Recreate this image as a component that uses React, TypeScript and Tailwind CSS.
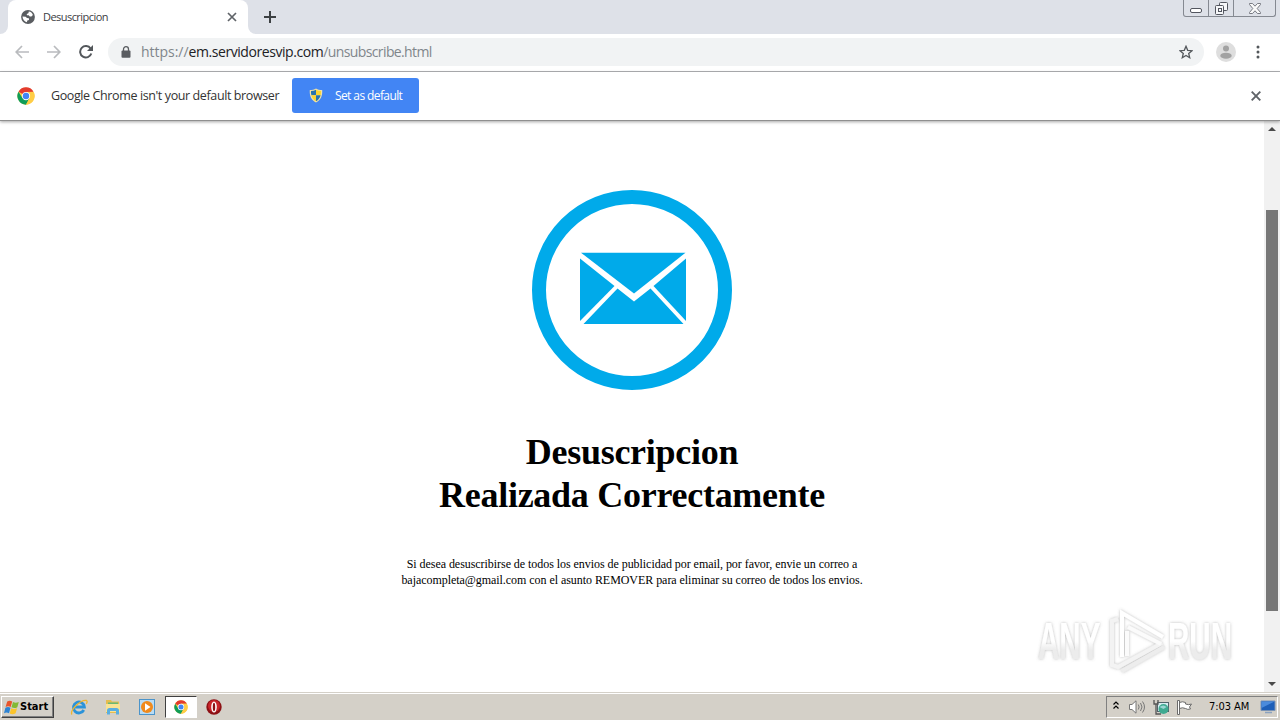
import React from 'react'

const uiFont = "font-['Open_Sans','Noto_Sans',sans-serif]"

const GlobeIcon = () => (
  <svg width="14" height="14" viewBox="0 0 14 14" className="shrink-0">
    <circle cx="7" cy="7" r="6.9" fill="#5a5d61" />
    <path d="M7.8 1.5c1.9.2 3.6 1.6 4.1 3.6L10.400 6.500 8.800 6.600 7.700 5.300 6 5.200 5.700 4 7.400 3.200z" fill="#fff" />
    <path d="M1.500 6.600 4.700 6.700 6 8 7.900 8.300 8 10 6.300 10.600 5.900 12.300C3.500 11.800 1.600 9.600 1.500 6.600z" fill="#fff" />
  </svg>
)

const ChromeIcon = ({ size }: { size: number }) => (
  <svg width={size} height={size} viewBox="0 0 48 48" className="shrink-0">
    <circle cx="24" cy="24" r="23" fill="#ffcd46" />
    <path d="M24 24 4.080 12.500A23 23 0 0 1 43.920 12.500L24 13z" fill="#e33b2e" />
    <path d="M4.080 12.500A23 23 0 0 0 24 47L33.500 29.500 24 34 14.500 29.500z" fill="#0f9d58" />
    <path d="M24 13H44.200A23 23 0 0 1 24 47L33.500 29.500z" fill="#ffcd46" />
    <circle cx="24" cy="24" r="11" fill="#fff" />
    <circle cx="24" cy="24" r="8.600" fill="#4285f4" />
  </svg>
)

const ShieldIcon = () => (
  <svg width="14" height="15" viewBox="0 0 14 15" className="shrink-0">
    <path d="M7 .4C5.200 1.500 3.200 2 .8 2c-.4 5.500 1.300 10 6.200 12.600C11.900 12 13.600 7.500 13.200 2 10.800 2 8.800 1.500 7 .4z" fill="#f0e2a8" />
    <path d="M7 1.700C5.500 2.500 3.900 2.900 2 3c-.1 1.600 0 3 .4 4.300H7z" fill="#2873ae" />
    <path d="M7 1.700c1.500.8 3.100 1.200 5 1.300.1 1.600 0 3-.4 4.300H7z" fill="#fbd431" />
    <path d="M2.400 7.300H7v6C4.700 12 3.100 10 2.400 7.300z" fill="#fbd431" />
    <path d="M11.600 7.300H7v6c2.300-1.300 3.900-3.300 4.600-6z" fill="#2873ae" />
  </svg>
)

const TabStrip = () => (
  <div className="flex h-[34px] shrink-0 items-start justify-between bg-[#dee1e8]">
    <div className="flex h-full items-end">
      <div className="h-full w-2 bg-white">
        <div className="h-full w-2 rounded-br-lg bg-[#dee1e8]" />
      </div>
      <div className="flex h-full w-[240px] items-center rounded-t-lg bg-white pr-[11px] pl-[13px]">
        <GlobeIcon />
        <span className="ml-2 flex-1 text-[11px] tracking-[-0.55px] text-[#3c4043]">Desuscripcion</span>
        <svg width="10" height="10" viewBox="0 0 10 10">
          <path d="M1 1l8 8M9 1L1 9" stroke="#5f6368" strokeWidth="1.7" />
        </svg>
      </div>
      <div className="h-full w-2 bg-white">
        <div className="h-full w-2 rounded-bl-lg bg-[#dee1e8]" />
      </div>
      <svg width="12" height="12" viewBox="0 0 12 12" className="mb-[11px] ml-2">
        <path d="M6 0v12M0 6h12" stroke="#3c4043" strokeWidth="2" />
      </svg>
    </div>
    <div className="mr-1 flex h-[17px] w-[93px] rounded-b-[3px] border border-t-0 border-[#858991]">
      <div className="flex w-[25px] justify-center border-r border-[#858991] pt-2">
        <svg width="12" height="5" viewBox="0 0 12 5">
          <rect x=".5" y=".5" width="11" height="4" rx="1.500" fill="#fff" stroke="#53565f" />
        </svg>
      </div>
      <div className="flex w-[25px] justify-center border-r border-[#858991] pt-[2px]">
        <svg width="13" height="13" viewBox="0 0 13 13" fill="#f6f7f9" stroke="#53565f">
          <rect x="4.500" y=".5" width="8" height="8" rx="1" />
          <rect x=".5" y="3.500" width="8" height="9" rx="1" />
          <rect x="3.500" y="6.500" width="3" height="3" />
        </svg>
      </div>
      <div className="flex flex-1 justify-center pt-[3px]">
        <svg width="12" height="11" viewBox="0 0 12 11">
          <path d="M.5.500h3L6 3.200 8.500.5h3v1L8.200 5.500l3.300 4v1h-3L6 7.800 3.500 10.500h-3v-1l3.300-4L.5 1.500z" fill="#fafafa" stroke="#6b6e76" strokeWidth=".9" />
        </svg>
      </div>
    </div>
  </div>
)

const Toolbar = () => (
  <div className="flex h-[38px] shrink-0 items-center border-b border-[#b1b2b5] bg-white pr-[15px] pl-[15px]">
    <svg width="14" height="14" viewBox="0 0 14 14" fill="none" stroke="#b9bbbe" strokeWidth="1.700" className="mb-[2px]">
      <path d="M14 7H1.500M7 1L1.200 7 7 13" />
    </svg>
    <svg width="14" height="14" viewBox="0 0 14 14" fill="none" stroke="#b9bbbe" strokeWidth="1.700" className="mb-[2px] ml-[18px]">
      <path d="M0 7h12.500M7 1l5.800 6L7 13" />
    </svg>
    <svg width="14" height="14" viewBox="0 0 14 14" fill="none" className="mb-[2px] ml-[18px]">
      <path d="M12.300 8.500A5.700 5.700 0 1 1 11.600 3.600" stroke="#53575b" strokeWidth="2" />
      <path d="M14 0v6H8z" fill="#53575b" />
    </svg>
    <div className="mb-px ml-[15px] flex h-7 w-[1096px] items-center rounded-full bg-[#f1f3f4] pr-[11px] pl-[13px]">
      <svg width="10" height="12" viewBox="0 0 10 12" className="mb-px">
        <path d="M2.500 5V3.200a2.500 2.500 0 0 1 5 0V5" fill="none" stroke="#5a5d61" strokeWidth="1.300" />
        <rect x=".5" y="4.500" width="9" height="7.300" rx="1" fill="#5a5d61" />
      </svg>
      <span className="ml-[10px] flex-1 pb-px text-sm text-[#80868b]">
        <span className="tracking-[-0.03px]">https://</span>
        <span className="tracking-[-0.43px] text-[#202124]">em.servidoresvip.com</span>
        <span className="tracking-[-0.62px]">/unsubscribe.html</span>
      </span>
      <svg width="14" height="14" viewBox="0 0 14 14" className="mb-px">
        <path d="M7 1.300l1.700 4 4.300.4-3.300 2.800 1 4.200L7 10.500l-3.700 2.200 1-4.200L1 5.700l4.300-.4z" fill="none" stroke="#53575b" strokeWidth="1.300" />
      </svg>
    </div>
    <svg width="20" height="20" viewBox="0 0 20 20" className="mb-px ml-3">
      <circle cx="10" cy="10" r="10" fill="#dedede" />
      <circle cx="10" cy="6.400" r="3" fill="#a2a2a2" />
      <ellipse cx="10" cy="13.700" rx="5.700" ry="3" fill="#a2a2a2" />
    </svg>
    <svg width="4" height="14" viewBox="0 0 4 14" fill="#53575b" className="mb-px ml-auto mr-[5px]">
      <circle cx="2" cy="2" r="1.500" />
      <circle cx="2" cy="7" r="1.500" />
      <circle cx="2" cy="12" r="1.500" />
    </svg>
  </div>
)

const DefaultBrowserBar = () => (
  <div className="z-10 flex h-[49px] shrink-0 items-center border-b border-[#8f8f8f] bg-white pr-[19px] pl-[17px] shadow-[0_1px_3px_rgba(0,0,0,0.35)]">
    <ChromeIcon size={18} />
    <span className="ml-4 w-[241px] text-[12.5px] tracking-[-0.39px] whitespace-nowrap text-[#333]">
      Google Chrome isn't your default browser
    </span>
    <button className="mb-px flex h-[35px] w-[127px] items-center rounded-[3px] bg-[#4285f4] pl-[17px] text-xs text-white">
      <ShieldIcon />
      <span className="ml-3 tracking-[-0.6px] whitespace-nowrap">Set as default</span>
    </button>
    <svg width="10" height="10" viewBox="0 0 10 10" className="ml-auto">
      <path d="M.7.700l8.600 8.600M9.300.7L.7 9.300" stroke="#5f6368" strokeWidth="1.900" />
    </svg>
  </div>
)

const EnvelopeLogo = () => (
  <svg width="200" height="200" viewBox="0 0 200 200" className="shrink-0">
    <circle cx="100" cy="100" r="93" fill="none" stroke="#00aaea" strokeWidth="14" />
    <g fill="#00aaea">
      <path d="M49 62.700H153.500L102 103.500z" />
      <path d="M48 68.500L82.500 96 48 131z" />
      <path d="M154 68.500V131L121.500 96z" />
      <path d="M51.500 134L85.500 98.500 102 111.500 118.500 98.500 151.500 134z" />
    </g>
  </svg>
)

const Watermark = () => (
  <svg width="200" height="68" viewBox="0 0 200 68" className="absolute right-[45px] bottom-[17px] overflow-visible">
    <defs>
      <filter id="halo" x="-10%" y="-10%" width="120%" height="120%">
        <feDropShadow dx="0" dy="0" stdDeviation="1.500" floodColor="#777" floodOpacity=".5" />
      </filter>
      <linearGradient id="sheen" x1="0" y1="0" x2="0" y2="1">
        <stop offset=".5" stopColor="#fff" />
        <stop offset=".65" stopColor="#ececec" />
      </linearGradient>
    </defs>
    <g filter="url(#halo)">
      <g fill="url(#sheen)" fontSize="51" fontWeight="bold" fontFamily="'Liberation Sans', sans-serif">
        <text transform="translate(3 52) scale(0.58 1)">ANY</text>
        <text transform="translate(133 52) scale(0.58 1)">RUN</text>
      </g>
      <g fill="none" strokeWidth="4">
        <path d="M83 12l-6 2v44l6 2 44-24" stroke="#f3f3f3" />
        <path d="M93 20l33 17M92 24v25" stroke="#fbfbfb" />
        <path d="M87 50V6l41 24" stroke="#fff" />
        <path d="M87 64l42-24" stroke="#ededed" />
      </g>
    </g>
  </svg>
)

const Page = () => (
  <div className="relative flex min-h-0 flex-1 bg-white font-['Liberation_Serif',serif] text-black">
    <main className="flex flex-1 flex-col items-center pt-[69px] text-center">
      <EnvelopeLogo />
      <h1 className="mt-[41px] text-[36px] leading-[43px] font-bold tracking-[-0.27px]">
        Desuscripcion
        <br />
        Realizada Correctamente
      </h1>
      <p className="mt-[39px] text-xs leading-4 tracking-[-0.05px]">
        Si desea desuscribirse de todos los envios de publicidad por email, por favor, envie un correo a
        <br />
        bajacompleta@gmail.com con el asunto REMOVER para eliminar su correo de todos los envios.
      </p>
    </main>
    <div className="flex w-4 flex-col items-center justify-between bg-[#f1f1f1] py-[6px]">
      <svg width="8" height="4" viewBox="0 0 8 4"><path d="M0 4l4-4 4 4z" fill="#4a4a4a" /></svg>
      <div className="mt-2 h-[401px] w-3 bg-[#777]" />
      <svg width="8" height="4" viewBox="0 0 8 4"><path d="M0 0h8L4 4z" fill="#4a4a4a" /></svg>
    </div>
    <Watermark />
  </div>
)

const StartButton = () => (
  <button className="flex h-[22px] w-[53px] items-center border border-t-white border-r-[#404040] border-b-[#404040] border-l-white bg-[#d4d0c8] pl-[2px] shadow-[inset_-1px_-1px_0_#808080]">
    <svg width="16" height="15" viewBox="0 0 16 15" className="shrink-0">
      <path d="M3.200 1.500C5 .4 6.600.5 8.200 1.500L6.700 7C5 6 3.400 6 1.600 7z" fill="#e8552b" />
      <path d="M9 2c1.800 1 3.600 1 5.800 0l-1.500 5.200C11.300 8.400 9.500 8.300 7.500 7.300z" fill="#83b935" />
      <path d="M1.400 7.800c1.800-1 3.400-1 5.100 0L5 13.300c-1.700-1-3.300-1-5 0z" fill="#2d83d3" />
      <path d="M7.200 8.200c1.900 1 3.700 1 5.900 0l-1.500 5.100c-2 1.100-3.900 1.100-5.900.3z" fill="#fbc42b" />
    </svg>
    <span className="font-['DejaVu_Sans_Condensed','DejaVu_Sans',sans-serif] text-[11px] font-bold text-black">Start</span>
  </button>
)

const Taskbar = () => (
  <div className="flex h-7 shrink-0 items-center border-t border-[#d4d0c8] bg-[#d4d0c8] pt-px pl-px shadow-[inset_0_1px_0_#fff]">
    <StartButton />
    <svg width="18" height="18" viewBox="0 0 18 18" fill="none" className="ml-4">
      <path d="M13.800 12A5.500 5.500 0 1 1 14.400 9H5" stroke="#2b93d9" strokeWidth="2.800" />
      <path d="M2 16.500C-.5 13 10 1.500 16.500 2.500c1 .5.700 2-.2 3.300" stroke="#efb52e" strokeWidth="1.300" />
    </svg>
    <svg width="16" height="16" viewBox="0 0 16 16" className="ml-[17px]">
      <path d="M1 1h5l1 1.500h7V14H1z" fill="#e5bd50" />
      <path d="M3 3.500h10v4H3z" fill="#69b875" />
      <path d="M1 5h14v8H1z" fill="#f9e394" />
      <path d="M2 15.500v-4Q2 9 4.500 9h7Q14 9 14 11.500v4h-3V12H5v3.500z" fill="#5aaee0" />
    </svg>
    <svg width="16" height="16" viewBox="0 0 16 16" className="ml-[18px]">
      <rect x=".5" y=".5" width="15" height="15" fill="#b9dcf4" stroke="#4b94ca" />
      <circle cx="8" cy="8" r="6" fill="#f08a1c" />
      <path d="M6 4.300v7.400L11.500 8z" fill="#fff" />
    </svg>
    <div className="ml-[10px] flex h-[22px] w-8 items-center justify-center border border-t-[#404040] border-r-white border-b-white border-l-[#404040] bg-white">
      <ChromeIcon size={14} />
    </div>
    <svg width="16" height="16" viewBox="0 0 16 16" className="ml-[9px]">
      <circle cx="8" cy="8" r="7.700" fill="#8d1014" />
      <circle cx="8" cy="7" r="6" fill="#c9252a" />
      <ellipse cx="8" cy="8" rx="2.800" ry="5.500" fill="#fff" />
      <ellipse cx="8" cy="8" rx="1.200" ry="4.300" fill="#8d1014" />
    </svg>
    <div className="mr-[2px] ml-auto flex h-[22px] w-[172px] items-center border border-t-[#808080] border-r-white border-b-white border-l-[#808080] pl-[6px]">
      <svg width="6" height="9" viewBox="0 0 6 9" fill="none" stroke="#000" strokeWidth="1.200" className="mb-[3px]">
        <path d="M.5 3.500L3 1l2.500 2.500M.5 7.500L3 5l2.500 2.500" />
      </svg>
      <svg width="16" height="14" viewBox="0 0 16 14" fill="none" className="ml-[10px]">
        <path d="M.5 4.500H3L7 .8v12.400L3 9.500H.5z" fill="#fff" stroke="#777" />
        <path d="M9.300 4.500q1.700 2.500 0 5M11.500 3q3 4 0 8M13.500 1.500q4 5.500 0 11" stroke="#777" />
      </svg>
      <svg width="17" height="16" viewBox="0 0 17 16" className="ml-2">
        <rect x="4.500" y="3.500" width="11" height="9" fill="#d7edf1" stroke="#53636b" />
        <path d="M1 1v4h4V1M3 5v10h5" fill="none" stroke="#555" strokeWidth="1.300" />
        <circle cx="10.500" cy="10" r="5" fill="#3faa91" />
        <path d="M6.500 8q4-3 7 0l-3 2z" fill="#9bd5d2" />
      </svg>
      <svg width="17" height="15" viewBox="0 0 17 15" className="ml-[6px]">
        <path d="M3.500 2.500q3-1.500 6 0v1.500q3 1.300 6 0l-2 3 1 2q-3 1-5-.5-3-1.500-6 0z" fill="#fff" stroke="#6b6b6b" />
        <path d="M1.500.500h2v14h-2z" fill="#fff" stroke="#6b6b6b" />
      </svg>
      <span className="ml-4 w-[42px] font-['DejaVu_Sans_Condensed','DejaVu_Sans',sans-serif] text-[11px] tracking-[-0.05px] whitespace-nowrap text-black">7:03 AM</span>
      <svg width="16" height="14" viewBox="0 0 16 14" className="ml-[9px]">
        <path d="M1 1h14v9.500H1z" fill="#1e5fb8" stroke="#7a93b5" />
        <path d="M1.500 1.500h13L1.500 8z" fill="#4b8bdc" />
        <path d="M5 12.500h7" stroke="#8ba2bf" strokeWidth="1.500" />
      </svg>
    </div>
  </div>
)

const App: React.FC = () => {
  return (
    <div className={`flex h-[720px] w-[1280px] flex-col overflow-hidden bg-white ${uiFont}`}>
      <TabStrip />
      <Toolbar />
      <DefaultBrowserBar />
      <Page />
      <Taskbar />
    </div>
  )
}

export default App
